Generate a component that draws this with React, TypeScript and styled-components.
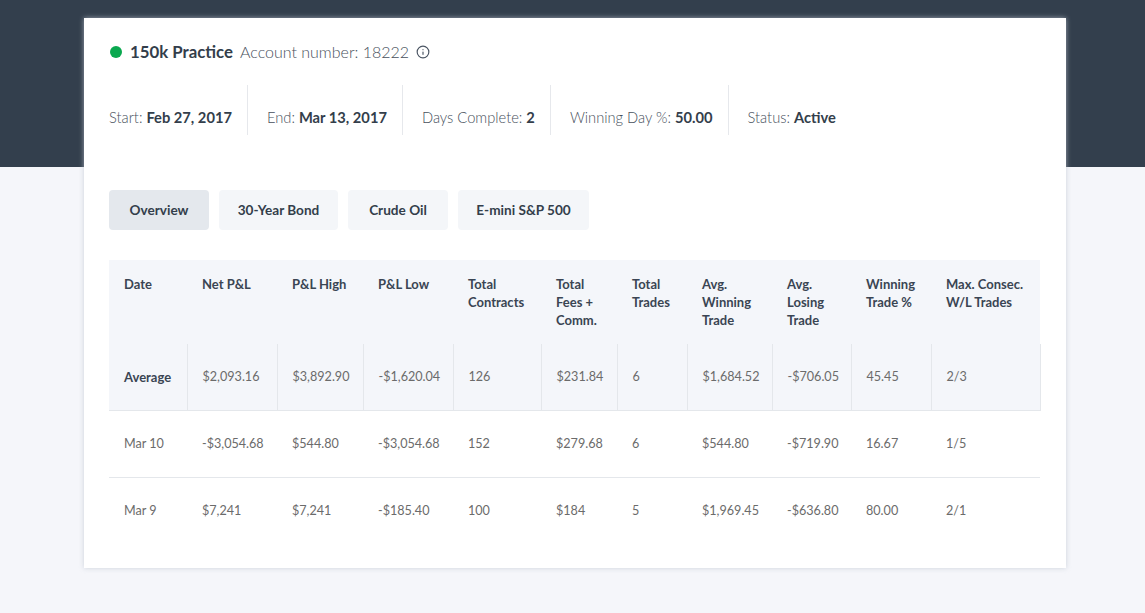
import React from 'react'
import styled, { createGlobalStyle } from 'styled-components'
import { Info } from 'lucide-react'

const GlobalStyle = createGlobalStyle`
    html, body {
        margin: 0;
        padding: 0;
    }
    body {
        font-family: Lato, 'Noto Sans', sans-serif;
        background: linear-gradient(#333f4d 0, #333f4d 167px, #f5f6fa 167px);
        min-height: 613px;
        color: #333e4b;
    }
`

const Page = styled.div`
    padding: 18px 0 40px 84px;
`

const Card = styled.section`
    width: 982px;
    box-sizing: border-box;
    background: #fff;
    padding: 24px 26px 24px 25px;
    box-shadow: 0 0 5px rgba(190, 198, 208, 0.75);
`

const TitleRow = styled.div`
    display: flex;
    align-items: center;
    height: 20px;
    line-height: 20px;

    .title__dot {
        width: 12px;
        height: 12px;
        border-radius: 50%;
        background: #0aa84f;
        margin: 0 8px 0 1px;
    }
    .title__name {
        font-size: 16.8px;
        font-weight: 700;
        color: #333e4b;
        margin-right: 7px;
    }
    .title__account {
        font-size: 16px;
        font-weight: 300;
        color: #47505c;
        margin-right: 7px;
    }
    svg {
        color: #4b5563;
    }
`

const Stats = styled.div`
    display: flex;
    margin-top: 23px;
`

const Stat = styled.div`
    height: 50px;
    box-sizing: border-box;
    display: flex;
    align-items: center;
    padding: 14px 15px 0 19px;
    font-size: 14.7px;
    font-weight: 300;
    color: #47505c;
    border-left: 1px solid #e6e8ec;

    &:first-child {
        padding-left: 0;
        border-left: none;
    }
    b {
        font-weight: 700;
        color: #333e4b;
        margin-left: 4px;
    }
`

const Tabs = styled.div`
    display: flex;
    gap: 10px;
    margin-top: 55px;
`

const Tab = styled.button<{ $active?: boolean; $width: number }>`
    width: ${(p) => p.$width}px;
    height: 40px;
    border: none;
    border-radius: 4px;
    background: ${(p) => (p.$active ? '#e4e8ed' : '#f4f6f9')};
    font-family: inherit;
    font-size: 13.6px;
    font-weight: 700;
    color: #333e4b;
    cursor: pointer;
`

const Table = styled.table`
    margin-top: 30px;
    width: 931px;
    border-collapse: collapse;
    table-layout: fixed;
    font-size: 13px;
    line-height: 18px;
`

const HeadCell = styled.th<{ $width: number }>`
    width: ${(p) => p.$width}px;
    box-sizing: border-box;
    background: #f4f6fa;
    text-align: left;
    vertical-align: top;
    padding: 15px 15px;
    height: 84px;
    font-weight: 700;
    color: #3a4553;
`

const Row = styled.tr<{ $summary?: boolean; $last?: boolean }>`
    background: ${(p) => (p.$summary ? '#f4f6fa' : '#fff')};
    border-bottom: ${(p) => (p.$last ? 'none' : '1px solid #e4e7eb')};

    td {
        border-right: ${(p) => (p.$summary ? '1px solid #e4e7eb' : 'none')};
    }
`

const Cell = styled.td<{ $label?: boolean }>`
    padding: 24px 15px 24px;
    height: 66px;
    box-sizing: border-box;
    white-space: nowrap;
    font-size: ${(p) => (p.$label ? '13px' : '12.6px')};
    font-weight: ${(p) => (p.$label ? 700 : 400)};
    color: ${(p) => (p.$label ? '#3a4553' : '#6b6b6b')};
`

const columns: [string, number][] = [
    ['Date', 78],
    ['Net P&L', 90],
    ['P&L High', 86],
    ['P&L Low', 90],
    ['Total Contracts', 88],
    ['Total Fees + Comm.', 76],
    ['Total Trades', 70],
    ['Avg. Winning Trade', 85],
    ['Avg. Losing Trade', 79],
    ['Winning Trade %', 80],
    ['Max. Consec. W/L Trades', 109],
]

const rows = [
    ['Average', '$2,093.16', '$3,892.90', '-$1,620.04', '126', '$231.84', '6', '$1,684.52', '-$706.05', '45.45', '2/3'],
    ['Mar 10', '-$3,054.68', '$544.80', '-$3,054.68', '152', '$279.68', '6', '$544.80', '-$719.90', '16.67', '1/5'],
    ['Mar 9', '$7,241', '$7,241', '-$185.40', '100', '$184', '5', '$1,969.45', '-$636.80', '80.00', '2/1'],
]

const tabs: [string, number][] = [
    ['Overview', 100],
    ['30-Year Bond', 119],
    ['Crude Oil', 100],
    ['E-mini S&P 500', 131],
]

const stats = [
    ['Start:', 'Feb 27, 2017'],
    ['End:', 'Mar 13, 2017'],
    ['Days Complete:', '2'],
    ['Winning Day %:', '50.00'],
    ['Status:', 'Active'],
]

const App = () => {
    return (
        <>
            <GlobalStyle />
            <Page>
                <Card>
                    <TitleRow>
                        <span className='title__dot' />
                        <span className='title__name'>150k Practice</span>
                        <span className='title__account'>Account number: 18222</span>
                        <Info size={14} strokeWidth={2} />
                    </TitleRow>
                    <Stats>
                        {stats.map(([label, value]) => (
                            <Stat key={label}>
                                {label}
                                <b>{value}</b>
                            </Stat>
                        ))}
                    </Stats>
                    <Tabs>
                        {tabs.map(([name, width], i) => (
                            <Tab key={name} $width={width} $active={i === 0}>
                                {name}
                            </Tab>
                        ))}
                    </Tabs>
                    <Table>
                        <thead>
                            <tr>
                                {columns.map(([name, width]) => (
                                    <HeadCell key={name} $width={width}>
                                        {name}
                                    </HeadCell>
                                ))}
                            </tr>
                        </thead>
                        <tbody>
                            {rows.map((row, r) => (
                                <Row key={row[0]} $summary={r === 0} $last={r === rows.length - 1}>
                                    {row.map((value, c) => (
                                        <Cell key={c} $label={r === 0 && c === 0}>
                                            {value}
                                        </Cell>
                                    ))}
                                </Row>
                            ))}
                        </tbody>
                    </Table>
                </Card>
            </Page>
        </>
    )
}

export default App
